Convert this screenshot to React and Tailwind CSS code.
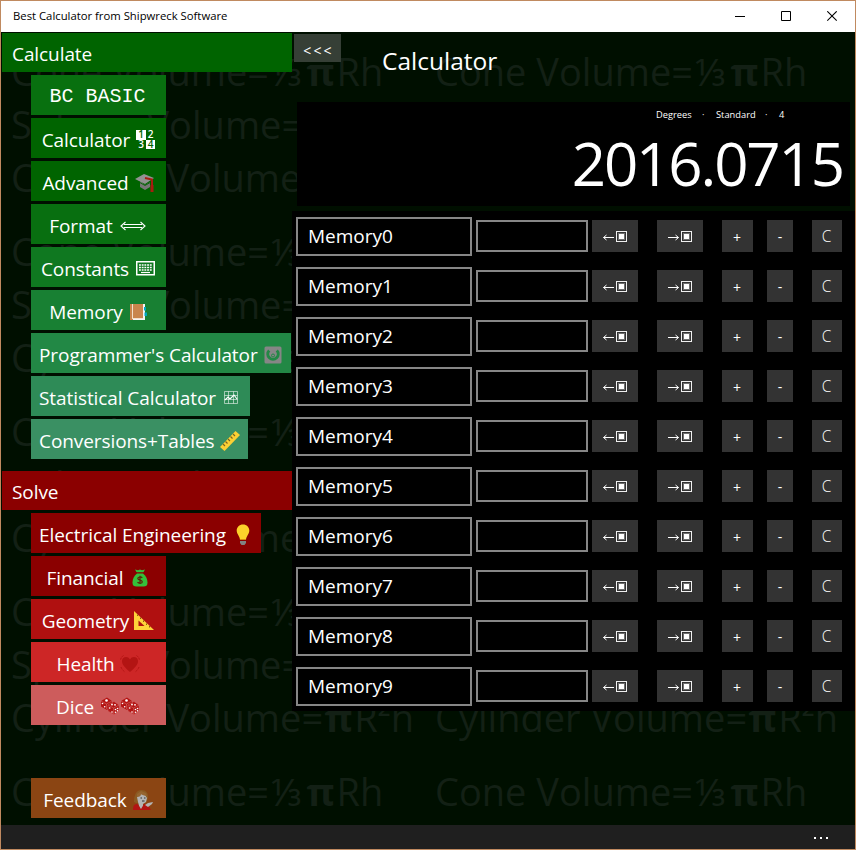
import React from "react";

const SANS = "font-['Open_Sans','Noto_Sans',sans-serif]";

function Svg({ w = 20, h = 20, className = "", children }) {
  return (
    <svg width={w} height={h} viewBox={`0 0 ${w} ${h}`} className={`shrink-0 ${className}`} fill="none">
      {children}
    </svg>
  );
}

const NumbersIcon = () => (
  <span className="grid h-[19px] w-[19px] shrink-0 grid-cols-2 grid-rows-2 text-center text-[10px] font-semibold leading-[9px] text-white">
    <span className="bg-white text-[#006400]">1</span>
    <span>2</span>
    <span>3</span>
    <span className="bg-white text-[#006400]">4</span>
  </span>
);

const CapIcon = () => (
  <Svg>
    <path d="M5 8v6l5 3 5-3V9l-5 3z" fill="#777" />
    <path d="M0 6 9 1l10 4-9 6z" fill="#929292" />
    <path d="m4 9 6 3.500 6-3.500" stroke="#006400" strokeWidth="0.900" />
    <path d="m10 5 7 1.500V18" stroke="#a81c10" strokeWidth="2" />
    <path d="M15.500 12h3v7h-3z" fill="#a81c10" />
  </Svg>
);

const DoubleArrowIcon = () => (
  <Svg w={26} h={12}>
    <path d="M4 4.500h18M4 7.500h18M5.500 2 1 6l4.500 4M20.500 2 25 6l-4.500 4" stroke="#fff" strokeWidth="1.100" />
  </Svg>
);

const KeyboardIcon = () => (
  <Svg w={19} h={15}>
    <rect x="0.750" y="0.750" width="17.500" height="13" stroke="#fff" strokeWidth="1.500" />
    <path d="M3 4h13M3 6.500h13M3 9h13" stroke="#fff" strokeWidth="1.600" strokeDasharray="1.900 0.800" />
    <path d="M5 11.500h9" stroke="#fff" strokeWidth="1.200" />
  </Svg>
);

const BookIcon = () => (
  <Svg w={19} h={18}>
    <path d="M13 1h3v16H2v-2z" fill="#f4f4f4" />
    <path d="M15 4h2v3.500h-2zM15.500 9.500h2.500v3.500h-2.500z" fill="#00a6c0" />
    <path d="M1 1h13v14H4v2H1z" fill="#c9854d" />
    <path d="M3.500 1v15M3 15.500h11" stroke="#f3dfcb" />
  </Svg>
);

const DialIcon = () => (
  <Svg w={18} h={18}>
    <rect x="0.500" y="0.500" width="17" height="17" rx="1.500" fill="#868686" />
    <path d="M5.200 4.500A5.200 5.200 0 1 0 12.800 4.500" stroke="#228845" strokeWidth="3" />
    <circle cx="9" cy="9.500" r="1.500" stroke="#228845" />
  </Svg>
);

const ChartIcon = () => (
  <Svg w={14} h={13}>
    <path d="M.5.5h13v12H.5zM.5 4.500h13M.5 8.500h13M4.500.5v12M9.500.5v12" stroke="#fff" strokeOpacity="0.700" strokeWidth="0.800" />
    <path d="m1 9 3-3 2 2 4-4 3 4" stroke="#fff" strokeWidth="1.100" />
  </Svg>
);

const RulerIcon = () => (
  <Svg>
    <path d="m0 16 15.500-16L20 4 4.500 20z" fill="#fbd034" />
    <path d="m3 13 2 2m.5-4.500 2 2M8 8l2 2M10.500 5.500l2 2M13 3l2 2" stroke="#7a6220" strokeWidth="1.100" />
  </Svg>
);

const BulbIcon = () => (
  <Svg w={14} h={21}>
    <path d="M7 .5C3.300.5.7 3.200.7 6.500c0 3.500 3 5.500 3.300 9.500h6c.3-4 3.300-6 3.300-9.500C13.300 3.200 10.700.5 7 .5z" fill="#fcd12a" />
    <path d="M4 15.500h6" stroke="#d98a10" />
    <path d="M4 17h6v2l-1.500 2h-3L4 19z" fill="#828282" />
  </Svg>
);

const MoneyIcon = () => (
  <Svg w={16} h={18}>
    <path d="M3 .5 6 1.200 8 .5l2 .7 3-.7-2 3.500H5z" fill="#35c03a" />
    <path d="M4 3.500h8" stroke="#8b0000" strokeWidth="0.800" />
    <path d="M5 4.500h6c2.500 2.300 4.500 5 4.500 9 0 3-1.500 4-4 4h-7c-2.500 0-4-1-4-4 0-4 2-6.700 4.500-9z" fill="#35c03a" />
    <path d="M10.300 8.700C9 7.500 5.800 7.700 5.800 9.500c0 2 4.500 1.100 4.500 3.200 0 2-3.300 2-4.800.6M8 6.800V15" stroke="#5c2208" strokeWidth="1.200" />
  </Svg>
);

const TriangleIcon = () => (
  <Svg w={20} h={19}>
    <path d="M0 0v19h20z" fill="#fdd23a" />
    <path d="M4.500 9.500v5.500h6z" fill="#b01010" />
    <path d="m3.500 3.500.1 1.500M6.500 6.500V8m3 1.500V11m3 1.500V14m3 1v1.500" stroke="#8c5a10" />
  </Svg>
);

const HeartIcon = () => (
  <Svg>
    <path d="M10 18C5 13.500 2 11 2 7c0-4.500 6-5.500 8-1.500C12 1.500 18 2.500 18 7c0 4-3 6.500-8 11z" fill="#b31413" />
    <path d="M3.500 1.500Q1 3 .5 6M16.500 1.500Q19 3 19.500 6M1 13q1 3 4 5M19 13q-1 3-4 5" stroke="#b31413" strokeDasharray="2 1" />
  </Svg>
);

const DiceIcon = () => (
  <Svg w={20} h={19}>
    <path d="m1 4 6-3.500L12 4v5l-5 4-6-3.500z" fill="#b31413" />
    <path d="m8 8 6-3.500L19 8v5.500l-5 4L8 14z" fill="#b31413" stroke="#cd5c5c" strokeWidth="0.500" />
    <path d="m1 4 5.500 3L12 4M6.500 7v5M8.500 8.300 13.700 11 19 8M13.700 11v6" stroke="#dd7770" strokeWidth="0.500" />
    <g fill="#fff">
      <circle cx="6.500" cy="3.500" r="1.300" />
      <circle cx="2.500" cy="6.500" r=".8" />
      <circle cx="4.700" cy="9.800" r=".8" />
      <circle cx="12" cy="7.500" r=".9" />
      <circle cx="15" cy="7.800" r=".9" />
      <circle cx="9.700" cy="11" r=".8" />
      <circle cx="12" cy="15" r=".8" />
      <circle cx="15.500" cy="12.500" r=".8" />
      <circle cx="17.500" cy="11.500" r=".8" />
      <circle cx="15.500" cy="15.200" r=".8" />
      <circle cx="17.500" cy="13.800" r=".8" />
    </g>
  </Svg>
);

const PersonIcon = () => (
  <Svg w={21} h={20}>
    <path d="M1 12C1 5 3 0 8.500 0 13 0 15.500 3 15 8l-2 5H3z" fill="#8b5a22" />
    <path d="m4 7 3-3 5 1 2 3-1 4-3 2v5H7l-2-7z" fill="#b4b4b4" />
    <path d="M4 7q4 0 4-3 3 2 6 2l-1-3-5-2-4 3z" fill="#966530" />
    <path d="M7.500 8h1.500M11 8h1.500M9 11h2.500" stroke="#333" />
    <path d="M0 20c0-4 1-6 4.500-6L8 19l3-5 4 1 3 5z" fill="#b31413" />
    <path d="m12 15 3-2 5-1-1 2-4 3z" fill="#b4b4b4" />
  </Svg>
);

const CALCULATE = [
  { label: "BC BASIC", box: "w-[135px] justify-center pr-[2px] bg-[#08700f]", mono: true },
  { label: "Calculator", box: "w-[135px] justify-center bg-[#006400]", gap: "gap-[6px]", icon: <NumbersIcon /> },
  { label: "Advanced", box: "w-[135px] justify-center bg-[#006400]", gap: "gap-[6px]", icon: <CapIcon /> },
  { label: "Format", box: "w-[135px] justify-center pr-[2px] bg-[#086f10]", gap: "gap-[7px]", icon: <DoubleArrowIcon /> },
  { label: "Constants", box: "w-[135px] justify-center pr-px bg-[#0f7820]", gap: "gap-[7px]", icon: <KeyboardIcon /> },
  { label: "Memory", box: "w-[135px] justify-center bg-[#188033]", gap: "gap-[6px]", icon: <BookIcon /> },
  { label: "Programmer's Calculator", box: "w-[260px] pl-2 bg-[#228845]", gap: "gap-[6px]", icon: <DialIcon /> },
  { label: "Statistical Calculator", box: "w-[219px] pl-2 bg-[#2e8b57]", gap: "gap-[8px]", icon: <ChartIcon /> },
  { label: "Conversions+Tables", box: "w-[217px] pl-2 bg-[#3a9063]", gap: "gap-[5px]", icon: <RulerIcon /> },
];

const SOLVE = [
  { label: "Electrical Engineering", box: "w-[230px] pl-2 bg-[#8b0000]", gap: "gap-[10px]", icon: <BulbIcon /> },
  { label: "Financial", box: "w-[135px] justify-center pr-[3px] bg-[#8b0000]", gap: "gap-[8px]", icon: <MoneyIcon /> },
  { label: "Geometry", box: "w-[135px] justify-center pr-px bg-[#b01010]", gap: "gap-[5px]", icon: <TriangleIcon /> },
  { label: "Health", box: "w-[135px] justify-center bg-[#cd2626]", gap: "gap-[6px]", icon: <HeartIcon /> },
  {
    label: "Dice",
    box: "w-[135px] justify-center pr-px bg-[#cd5c5c]",
    gap: "gap-[6px]",
    icon: (
      <span className="flex">
        <DiceIcon />
        <DiceIcon />
      </span>
    ),
  },
];

function MenuButton({ label, box, gap = "", icon, mono }) {
  return (
    <button className={`flex h-10 items-center whitespace-nowrap pt-[3px] text-[19px] leading-[26px] text-white ${box} ${gap}`}>
      <span className={mono ? "font-['Liberation_Mono',monospace] text-[20px]" : "tracking-[-0.080px]"}>{label}</span>
      {icon}
    </button>
  );
}

function SectionHeader({ label, color }) {
  return <h2 className={`h-[39px] pl-[10px] pt-[8px] text-[19px] leading-[26px] tracking-[-0.080px] text-white ${color}`}>{label}</h2>;
}

function Watermark() {
  return (
    <div className="absolute inset-0 flex overflow-hidden pl-[10px] pt-[13px] text-[#132015]">
      {[0, 1].map((col) => (
        <div key={col} className="w-[424px] shrink-0 whitespace-nowrap text-[38px] leading-[53px]">
          {[0, 1, 2, 3, 4].map((n) => (
            <div key={n} className={n < 4 ? "h-[180px]" : "h-[53px]"}>
              <p>Cone Volume=<span className="px-[2px]">⅓</span><b className="px-[2px]">π</b>Rh</p>
              {n < 4 && (
                <>
                  <p>Sphere Volume=4/3<b>π</b>R³</p>
                  <p>Cylinder Volume=<b className="px-[1.500px]">π</b>R²h</p>
                </>
              )}
            </div>
          ))}
        </div>
      ))}
    </div>
  );
}

function CellIcon({ right }) {
  return (
    <Svg w={24} h={12} className="mt-px">
      <path d={right ? "M0 6.500h10.500M7.500 4l3 2.500-3 2.500" : "M11 6.500H.5M3.500 4l-3 2.500 3 2.500"} stroke="#fff" />
      <rect x="13.500" y="0.500" width="10" height="10" stroke="#f0f0f0" />
      <rect x="15" y="2" width="7" height="7" fill="#707070" />
      <rect x="16" y="3" width="5" height="5" fill="#fff" />
    </Svg>
  );
}

const KEY = "flex h-8 items-center justify-center bg-[#333333] text-white";

function MemoryRow({ index }) {
  return (
    <div className="flex h-[50px] items-start pl-1 pt-[6px]">
      <div className="h-[39px] w-[176px] border-2 border-[#868686] pl-[10px] pt-[4px] text-[19px] leading-[26px] text-white">
        Memory{index}
      </div>
      <div className="ml-1 mt-[3px] flex">
        <div className="h-8 w-[112px] border-2 border-[#868686]" />
        <button className={`${KEY} ml-1 w-[46px]`}><CellIcon /></button>
        <button className={`${KEY} ml-[19px] w-[46px]`}><CellIcon right /></button>
        <button className={`${KEY} ml-[19px] w-[31px] pr-px pt-[2px] text-[14px]`}>+</button>
        <button className={`${KEY} ml-[14px] w-[26px] pt-px text-[14px]`}>-</button>
        <button className={`${KEY} ml-[19px] w-[30px] pr-px pt-[2px] text-[15.500px] font-light`}>C</button>
      </div>
    </div>
  );
}

function TitleBar() {
  return (
    <header className="flex h-[31px] items-center justify-between bg-white pl-3 pr-[17px]">
      <span className="whitespace-nowrap text-[11.300px] text-black">Best Calculator from Shipwreck Software</span>
      <div className="flex items-center gap-[35px] text-black">
        <Svg w={11} h={11}><path d="M0 5.500h10" stroke="#000" /></Svg>
        <Svg w={11} h={11}><path d="M.5.5h9v9H.5z" stroke="#000" /></Svg>
        <Svg w={11} h={11}><path d="m.3.3 9.400 9.400m0-9.400-9.400 9.400" stroke="#000" strokeWidth="1.100" /></Svg>
      </div>
    </header>
  );
}

export default function App() {
  return (
    <div className={`flex h-[850px] w-[856px] flex-col overflow-hidden border border-[#c08a60] bg-[#000f00] ${SANS}`}>
      <TitleBar />
      <div className="relative h-[793px]">
        <Watermark />
        <div className="relative flex h-full">
          <nav className="w-[291px] pl-px pt-px">
            <SectionHeader label="Calculate" color="bg-[#006400]" />
            <div className="flex flex-col gap-[3px] pl-[29px] pt-[3px]">
              {CALCULATE.map((item) => (
                <MenuButton key={item.label} {...item} />
              ))}
            </div>
            <div className="pt-3">
              <SectionHeader label="Solve" color="bg-[#8b0000]" />
            </div>
            <div className="flex flex-col gap-[3px] pl-[29px] pt-[3px]">
              {SOLVE.map((item) => (
                <MenuButton key={item.label} {...item} />
              ))}
            </div>
            <div className="pl-[29px] pt-[53px]">
              <MenuButton label="Feedback" box="w-[135px] justify-center bg-[#8b4513]" gap="gap-[6px]" icon={<PersonIcon />} />
            </div>
          </nav>
          <main className="w-[563px]">
            <div className="flex h-[70px] items-start">
              <button className="ml-[2px] mt-[2px] flex h-7 w-[47px] items-center justify-center bg-[#363f36] pl-[2px] pt-[4px] text-[14px] tracking-[2.200px] text-white">
                &lt;&lt;&lt;
              </button>
              <h1 className="ml-[41px] mt-[12px] text-[24.500px] leading-[34px] text-white">Calculator</h1>
            </div>
            <section className="ml-[5px] h-[104px] w-[553px] bg-black text-white">
              <div className="flex h-[24px] items-center pl-[359px] pt-[2px] text-[9.300px]">
                <span className="w-[46px]">Degrees</span>
                <span className="w-[14px]">·</span>
                <span className="w-[49px]">Standard</span>
                <span className="w-[14px]">·</span>
                <span>4</span>
              </div>
              <p className="pr-[7px] text-right text-[60px] leading-[75px] tracking-[-2.100px]">2016.0715</p>
            </section>
            <section className="mt-[5px] h-[500px] bg-black">
              {[0, 1, 2, 3, 4, 5, 6, 7, 8, 9].map((n) => (
                <MemoryRow key={n} index={n} />
              ))}
            </section>
          </main>
        </div>
      </div>
      <footer className="flex h-6 items-center justify-end gap-1 bg-[#1f1f1f] pr-[27px] pt-[2px]">
        <span className="h-[2px] w-[2px] bg-white" />
        <span className="h-[2px] w-[2px] bg-white" />
        <span className="h-[2px] w-[2px] bg-white" />
      </footer>
    </div>
  );
}
